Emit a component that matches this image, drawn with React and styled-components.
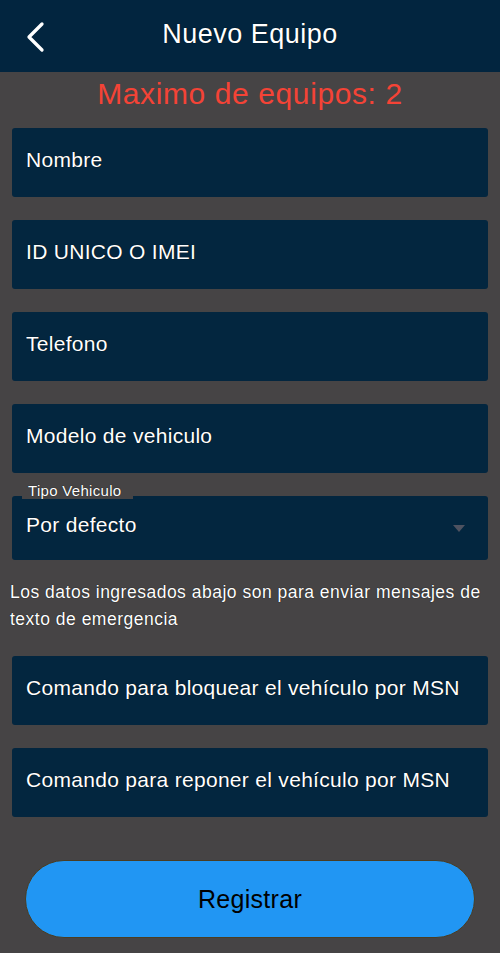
import React from 'react'
import styled, { createGlobalStyle } from 'styled-components'

const GlobalStyle = createGlobalStyle`
    html, body {
        margin: 0;
        padding: 0;
        background: #464445;
        font-family: "Liberation Sans", Arial, sans-serif;
    }
`

const Page = styled.div`
    width: 500px;
    min-height: 953px;
    background: #464445;
    display: flex;
    flex-direction: column;
`

const Header = styled.header`
    height: 72px;
    background: #02253f;
    display: flex;
    align-items: center;
    justify-content: center;
    position: relative;
`

const BackButton = styled.button`
    position: absolute;
    left: 24px;
    top: 21px;
    width: 24px;
    height: 32px;
    padding: 0;
    border: none;
    background: transparent;
    display: flex;
    align-items: center;
    justify-content: center;
`

const Title = styled.h1`
    margin: 0;
    margin-top: -4px;
    font-size: 27px;
    font-weight: 400;
    letter-spacing: 0.5px;
    color: #fff;
    text-shadow: 0 0 1px #000;
`

const Limit = styled.div`
    text-align: center;
    color: #f44336;
    font-size: 30px;
    letter-spacing: 0.6px;
    margin-top: 4px;
    line-height: 35px;
`

const Form = styled.div`
    display: flex;
    flex-direction: column;
    padding: 0 12px;
    margin-top: 17px;
`

const Field = styled.div`
    height: 69px;
    background: #03263f;
    border-radius: 3px;
    display: flex;
    align-items: center;
    padding: 0 14px 5px;
    box-sizing: border-box;
    margin-bottom: 23px;
    color: #fff;
    font-size: 21px;
    letter-spacing: 0.3px;
    text-shadow: 0 0 1px #000;
`

const SelectWrap = styled.div`
    position: relative;
`

const SelectLabel = styled.span`
    position: absolute;
    left: 10px;
    top: -13px;
    padding: 0 12px 0 6px;
    background: #464445;
    color: #fff;
    font-size: 15px;
    letter-spacing: 0.3px;
    line-height: 16px;
    text-shadow: 0 0 1px #000;
`

const SelectBox = styled.div`
    height: 64px;
    background: #03263f;
    border-radius: 3px;
    display: flex;
    align-items: flex-start;
    justify-content: space-between;
    padding: 17px 23px 0 14px;
    box-sizing: border-box;
    color: #fff;
    font-size: 21px;
    letter-spacing: 0.3px;
    text-shadow: 0 0 1px #000;
`

const Caret = styled.span`
    width: 0;
    height: 0;
    margin-top: 12px;
    border-left: 6px solid transparent;
    border-right: 6px solid transparent;
    border-top: 7px solid #4e5260;
`

const Note = styled.p`
    margin: 19px -2px 23px;
    color: #fff;
    font-size: 17.5px;
    letter-spacing: 0.5px;
    line-height: 27px;
    text-shadow: 0 0 1px #000;
`

const Footer = styled.div`
    padding: 20px 25px 0;
`

const Submit = styled.button`
    width: 450px;
    height: 78px;
    border-radius: 39px;
    border: 1px solid #4a3d22;
    background: #2196f3;
    color: #000;
    font-family: "Liberation Sans", Arial, sans-serif;
    font-size: 25px;
    letter-spacing: 0.3px;
`

const ChevronLeft = () => (
    <svg width="24" height="32" viewBox="0 0 24 32" fill="none">
        <path d="M18 3 L5 16 L18 29" stroke="#fff" strokeWidth="3.3" strokeLinecap="round" strokeLinejoin="round" />
    </svg>
)

const topFields = ['Nombre', 'ID UNICO O IMEI', 'Telefono', 'Modelo de vehiculo']
const commandFields = [
    'Comando para bloquear el vehículo por MSN',
    'Comando para reponer el vehículo por MSN',
]

const App = () => (
    <Page>
        <GlobalStyle />
        <Header>
            <BackButton>
                <ChevronLeft />
            </BackButton>
            <Title>Nuevo Equipo</Title>
        </Header>

        <Limit>Maximo de equipos: 2</Limit>

        <Form>
            {topFields.map((label) => (
                <Field key={label}>{label}</Field>
            ))}

            <SelectWrap>
                <SelectLabel>Tipo Vehiculo</SelectLabel>
                <SelectBox>
                    <span>Por defecto</span>
                    <Caret />
                </SelectBox>
            </SelectWrap>

            <Note>
                Los datos ingresados abajo son para enviar mensajes de texto de emergencia
            </Note>

            {commandFields.map((label) => (
                <Field key={label}>{label}</Field>
            ))}
        </Form>

        <Footer>
            <Submit>Registrar</Submit>
        </Footer>
    </Page>
)

export default App
